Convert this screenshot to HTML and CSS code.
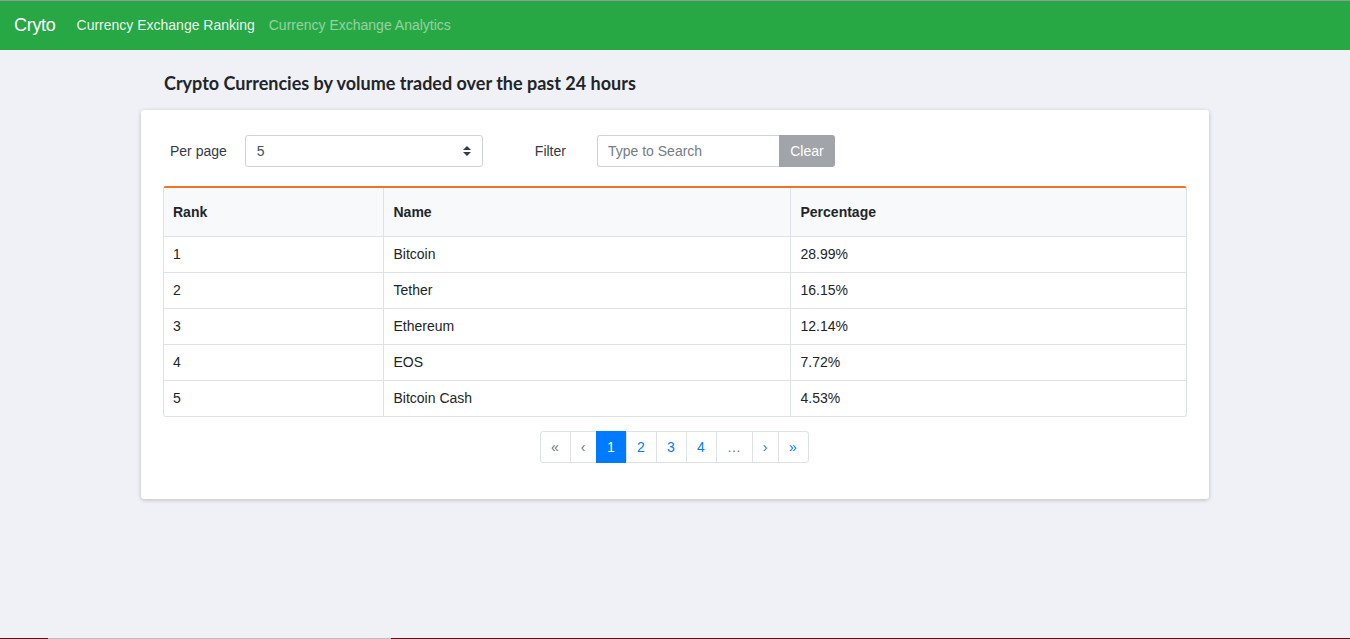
FILE: index.html
```html
<!DOCTYPE html>
<html lang="en">
<head>
<meta charset="utf-8">
<title>Cryto</title>
<link rel="stylesheet" href="styles.css">
</head>
<body>
<div class="page">
  <nav class="navbar">
    <a class="brand" href="#">Cryto</a>
    <a class="nav-link active" href="#">Currency Exchange Ranking</a>
    <a class="nav-link" href="#">Currency Exchange Analytics</a>
  </nav>
  <main class="main">
    <h1 class="title">Crypto Currencies by volume traded over the past 24 hours</h1>
    <section class="card">
      <div class="controls">
        <label class="ctl-label per-label">Per page</label>
        <div class="select">
          <span>5</span>
          <svg class="caret" width="8" height="12" viewBox="0 0 8 12"><path d="M4 1 L8 5 L0 5 Z M0 7 L8 7 L4 11 Z" fill="#343a40"/></svg>
        </div>
        <label class="ctl-label filter-label">Filter</label>
        <div class="input-group">
          <div class="input">Type to Search</div>
          <button class="btn-clear">Clear</button>
        </div>
      </div>
      <div class="table-wrap">
        <table class="table">
          <thead>
            <tr><th class="c1">Rank</th><th class="c2">Name</th><th class="c3">Percentage</th></tr>
          </thead>
          <tbody>
            <tr><td>1</td><td>Bitcoin</td><td>28.99%</td></tr>
            <tr><td>2</td><td>Tether</td><td>16.15%</td></tr>
            <tr><td>3</td><td>Ethereum</td><td>12.14%</td></tr>
            <tr><td>4</td><td>EOS</td><td>7.72%</td></tr>
            <tr><td>5</td><td>Bitcoin Cash</td><td>4.53%</td></tr>
          </tbody>
        </table>
      </div>
      <div class="pager-row">
        <ul class="pagination">
          <li class="pg muted w29">«</li>
          <li class="pg muted w26">‹</li>
          <li class="pg active w30">1</li>
          <li class="pg w30">2</li>
          <li class="pg w30">3</li>
          <li class="pg w30">4</li>
          <li class="pg muted w36">…</li>
          <li class="pg w26">›</li>
          <li class="pg w30 last">»</li>
        </ul>
      </div>
    </section>
  </main>
  <div class="taskbar"></div>
</div>
</body>
</html>
```
FILE: styles.css
```css
* { box-sizing: border-box; }
html, body { margin: 0; padding: 0; }
body {
  background: #f0f1f6;
  font-family: "Liberation Sans", Arial, sans-serif;
  font-size: 14px;
  color: #212529;
}
.page {
  min-height: 100vh;
  display: flex;
  flex-direction: column;
}
.navbar {
  height: 50px;
  border-top: 1px solid #8f9a92;
  background: #28a745;
  display: flex;
  align-items: center;
  padding: 0 0 1px 14px;
}
.brand {
  color: #fff;
  font-size: 18px;
  text-decoration: none;
  margin-right: 21px;
  letter-spacing: -0.3px;
}
.nav-link {
  color: rgba(255,255,255,0.5);
  font-size: 14px;
  text-decoration: none;
  margin-right: 14px;
}
.nav-link.active { color: rgba(255,255,255,0.92); }
.main {
  flex: 1;
  width: 1068px;
  margin: 0 auto;
}
.title {
  font-family: Lato, "Liberation Sans", sans-serif;
  font-weight: 700;
  font-size: 18px;
  color: #212529;
  margin: 0;
  padding: 23px 0 0 23px;
  height: 60px;
  line-height: 21px;
}
.card {
  background: #fff;
  border-radius: 3px;
  box-shadow: 0 1px 4px rgba(0,0,0,0.22);
  padding: 25px 22px 36px 22px;
}
.controls {
  display: flex;
  align-items: center;
  height: 32px;
  margin-bottom: 19px;
}
.ctl-label { color: #343a40; font-size: 14px; }
.per-label { margin-left: 7px; margin-right: 18px; }
.select {
  width: 238px;
  height: 32px;
  border: 1px solid #ced4da;
  border-radius: 3px;
  display: flex;
  align-items: center;
  justify-content: space-between;
  padding: 0 11px 0 11px;
  color: #495057;
}
.filter-label { margin-left: 52px; margin-right: 31px; }
.input-group { display: flex; height: 32px; }
.input {
  width: 182px;
  height: 32px;
  border: 1px solid #ced4da;
  border-right: none;
  border-radius: 3px 0 0 3px;
  padding: 0 10px;
  display: flex;
  align-items: center;
  color: #757c83;
}
.btn-clear {
  width: 56px;
  height: 32px;
  border: none;
  border-radius: 0 3px 3px 0;
  background: #a1a5aa;
  color: #fff;
  font-family: "Liberation Sans", Arial, sans-serif;
  font-size: 14px;
  padding: 0;
}
.table-wrap {
  border: 1px solid #dee2e6;
  border-top: 2px solid #ee7623;
  border-radius: 3px;
  overflow: hidden;
}
.table {
  width: 100%;
  border-collapse: collapse;
}
.table th, .table td {
  text-align: left;
  padding: 0 10px;
  border-left: 1px solid #dee2e6;
  border-top: 1px solid #dee2e6;
}
.table th:first-child, .table td:first-child { border-left: none; padding-left: 9px; }
.table th {
  background: #f8f9fa;
  height: 48px;
  font-weight: 700;
  border-top: none;
  color: #212529;
}
.table td { height: 36px; }
.c1 { width: 219px; }
.c2 { width: 407px; }
.pager-row {
  display: flex;
  justify-content: center;
  padding-top: 14px;
  padding-right: 2px;
}
.pagination {
  display: flex;
  list-style: none;
  margin: 0;
  padding: 0;
  border: 1px solid #dee2e6;
  border-radius: 3px;
  height: 32px;
}
.pg {
  height: 30px;
  display: flex;
  align-items: center;
  justify-content: center;
  color: #007bff;
  border-left: 1px solid #dee2e6;
  font-size: 14px;
}
.pg:first-child { border-left: none; }
.pg.muted { color: #6c757d; }
.pg.active { background: #007bff; color: #fff; border-color: #007bff; height: 32px; margin-top: -1px; }
.w29 { width: 29px; }
.w30 { width: 30px; }
.w26 { width: 26px; }
.w36 { width: 36px; }
.taskbar {
  height: 1px;
  background: linear-gradient(to right, #6b0d0d 0 48px, #bdbdbd 48px 391px, #6b0d0d 391px);
}
```
